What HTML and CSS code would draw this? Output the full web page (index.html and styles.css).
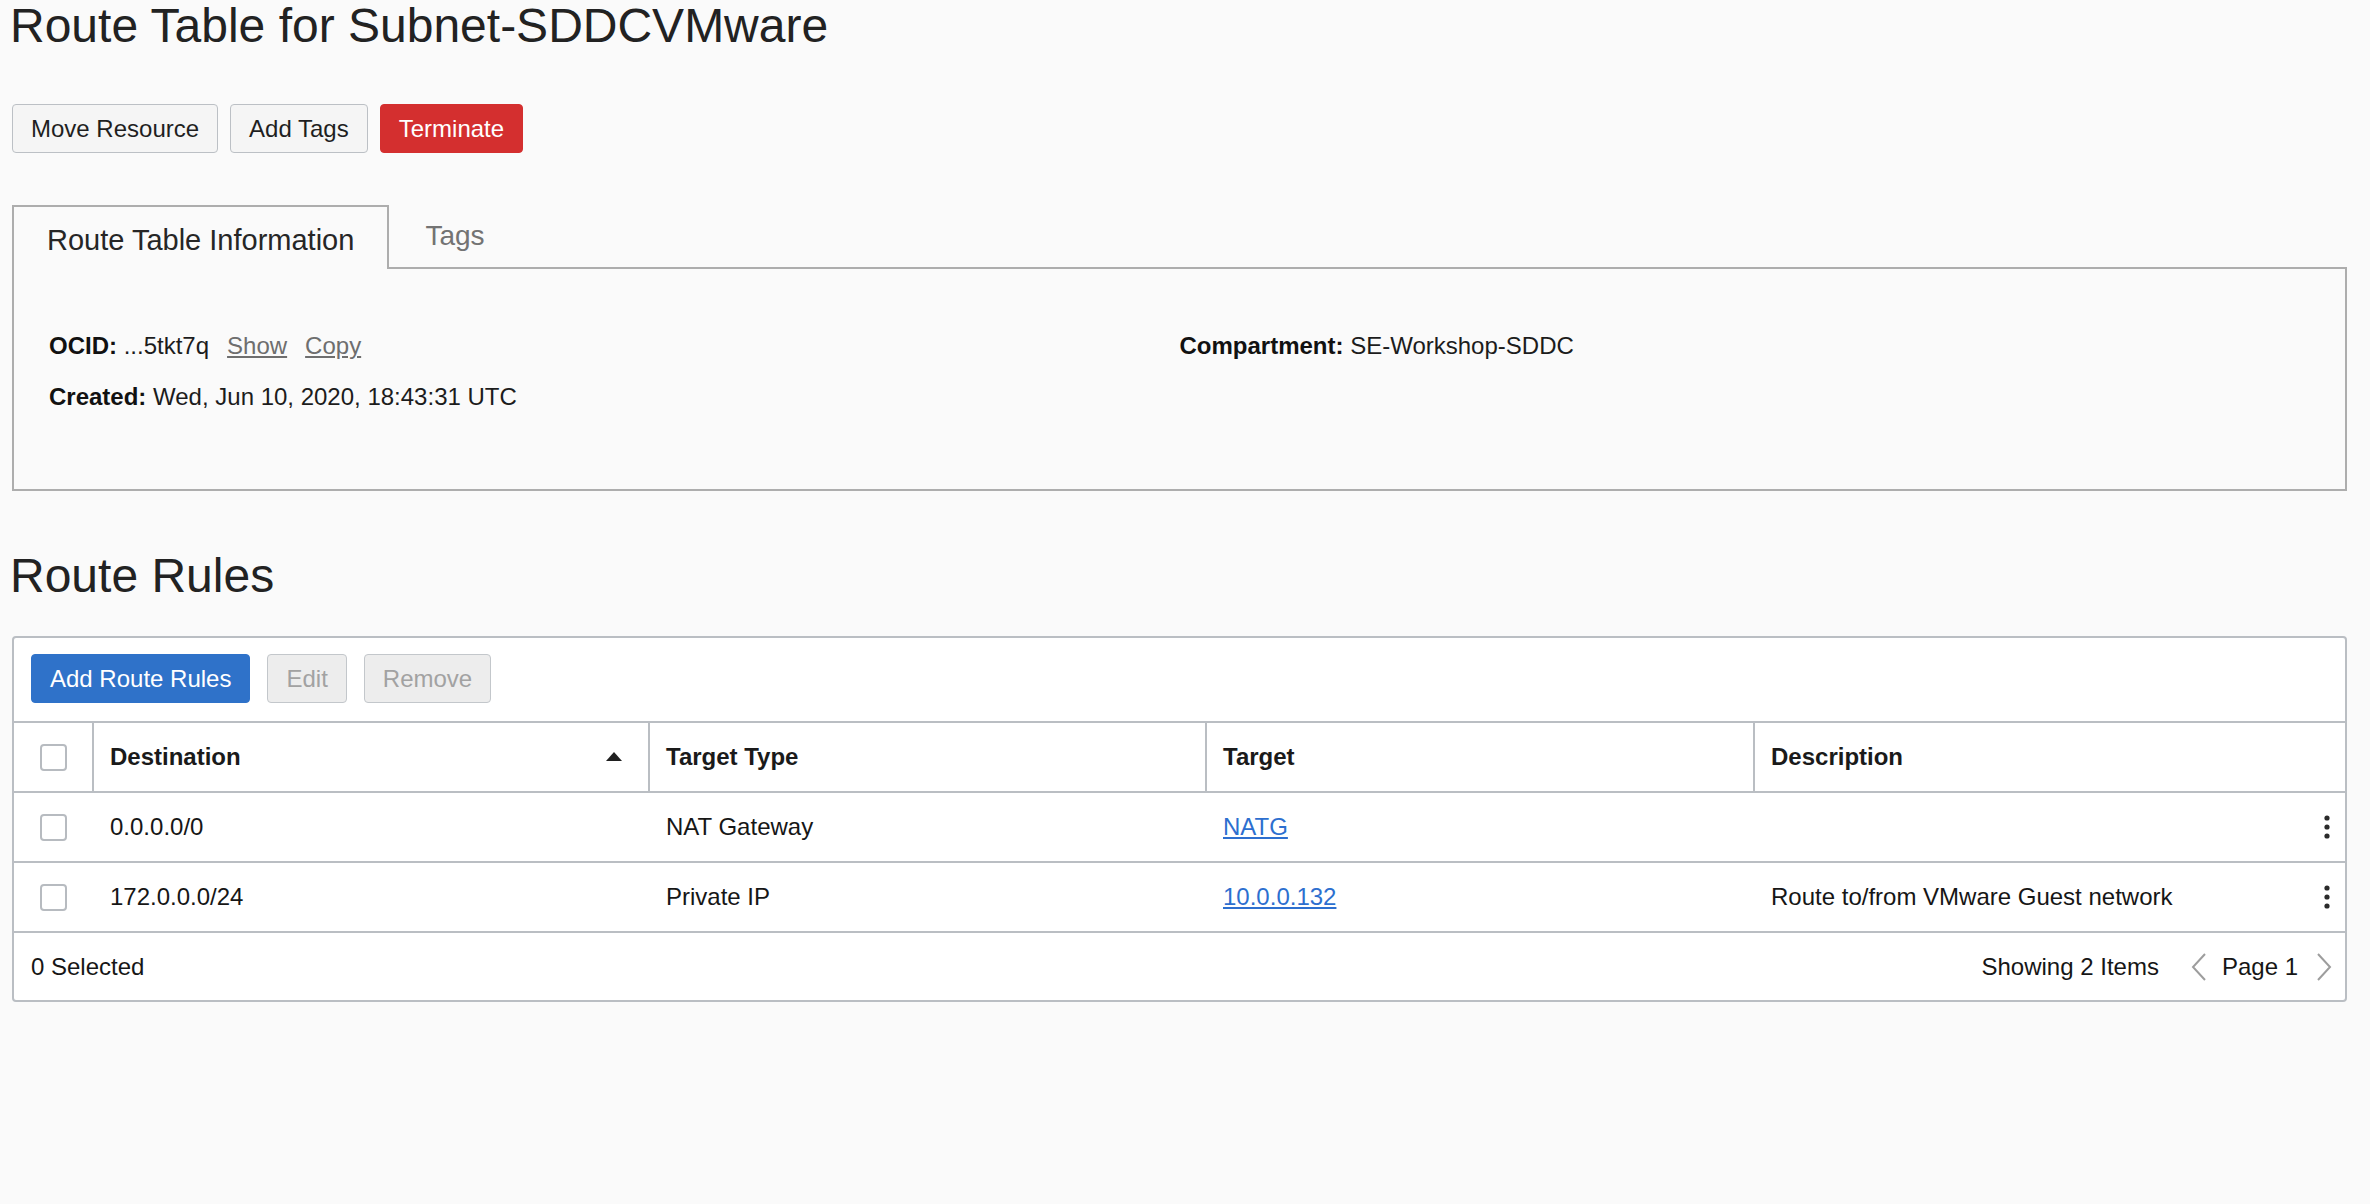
FILE: index.html
```html
<!DOCTYPE html>
<html lang="en">
<head>
<meta charset="utf-8">
<title>Route Table for Subnet-SDDCVMware</title>
<link rel="stylesheet" href="styles.css">
</head>
<body>
<div class="page">
  <h1 class="page-title">Route Table for Subnet-SDDCVMware</h1>

  <div class="actions">
    <button class="btn">Move Resource</button>
    <button class="btn">Add Tags</button>
    <button class="btn btn-danger">Terminate</button>
  </div>

  <div class="tabs">
    <div class="tabbar">
      <div class="tab tab-active">Route Table Information</div>
      <div class="tab tab-inactive">Tags</div>
      <div class="tab-fill"></div>
    </div>
    <div class="panel">
      <div class="info-grid">
        <div class="info-col">
          <div class="info-item"><span class="label">OCID:</span> <span>...5tkt7q</span><a class="sec-link">Show</a><a class="sec-link">Copy</a></div>
          <div class="info-item info-next"><span class="label">Created:</span> Wed, Jun 10, 2020, 18:43:31 UTC</div>
        </div>
        <div class="info-col">
          <div class="info-item"><span class="label">Compartment:</span> SE-Workshop-SDDC</div>
        </div>
      </div>
    </div>
  </div>

  <h2 class="section-title">Route Rules</h2>

  <div class="table-box">
    <div class="toolbar">
      <button class="btn btn-primary">Add Route Rules</button>
      <button class="btn btn-disabled">Edit</button>
      <button class="btn btn-disabled">Remove</button>
    </div>

    <div class="trow thead">
      <div class="cell cell-check"><span class="checkbox"></span></div>
      <div class="cell hcell hcell-sort">Destination
        <svg class="sort-icon" width="16" height="9" viewBox="0 0 16 9"><polygon points="8,0 16,9 0,9" fill="#1f1f1f"/></svg>
      </div>
      <div class="cell hcell">Target Type</div>
      <div class="cell hcell">Target</div>
      <div class="cell hcell">Description</div>
    </div>

    <div class="trow">
      <div class="cell cell-check"><span class="checkbox"></span></div>
      <div class="cell bcell">0.0.0.0/0</div>
      <div class="cell bcell">NAT Gateway</div>
      <div class="cell bcell"><a class="link">NATG</a></div>
      <div class="cell bcell cell-desc"><span></span>
        <svg class="kebab" width="6" height="24" viewBox="0 0 6 24"><circle cx="3" cy="3" r="2.6"/><circle cx="3" cy="12" r="2.6"/><circle cx="3" cy="21" r="2.6"/></svg>
      </div>
    </div>

    <div class="trow">
      <div class="cell cell-check"><span class="checkbox"></span></div>
      <div class="cell bcell">172.0.0.0/24</div>
      <div class="cell bcell">Private IP</div>
      <div class="cell bcell"><a class="link">10.0.0.132</a></div>
      <div class="cell bcell cell-desc"><span>Route to/from VMware Guest network</span>
        <svg class="kebab" width="6" height="24" viewBox="0 0 6 24"><circle cx="3" cy="3" r="2.6"/><circle cx="3" cy="12" r="2.6"/><circle cx="3" cy="21" r="2.6"/></svg>
      </div>
    </div>

    <div class="tfooter">
      <span class="selected">0 Selected</span>
      <div class="pager">
        <span class="count">Showing 2 Items</span>
        <svg class="chev chev-left" width="16" height="28" viewBox="0 0 16 28"><polyline points="14,1 2,14 14,27" fill="none" stroke="#9d9d9d" stroke-width="2"/></svg>
        <span class="page-num">Page 1</span>
        <svg class="chev chev-right" width="16" height="28" viewBox="0 0 16 28"><polyline points="2,1 14,14 2,27" fill="none" stroke="#9d9d9d" stroke-width="2"/></svg>
      </div>
    </div>
  </div>
</div>
</body>
</html>
```

FILE: styles.css
```css
* { box-sizing: border-box; }

html, body {
  margin: 0;
  padding: 0;
  background: #fafafa;
}

body {
  font-family: "Liberation Sans", Arial, Helvetica, sans-serif;
  color: #1c1c1c;
  font-size: 24px;
}

.page {
  padding: 0 23px 40px 12px;
}

.page-title {
  margin: 0 0 0 -2px;
  font-size: 48px;
  line-height: 52px;
  font-weight: normal;
  color: #222;
}

.actions {
  display: flex;
  gap: 12px;
  margin-top: 52px;
}

.btn {
  font-family: inherit;
  font-size: 24px;
  height: 49px;
  line-height: 47px;
  padding: 0 18px;
  border: 1px solid #bcc0c5;
  border-radius: 4px;
  background: #f5f5f5;
  color: #1f1f1f;
  cursor: pointer;
}

.btn-danger {
  background: #d42f2f;
  border-color: #d42f2f;
  color: #fff;
}

.btn-primary {
  background: #2f72c9;
  border-color: #2f72c9;
  color: #fff;
}

.btn-disabled {
  background: #ededed;
  border-color: #c3c7cb;
  color: #a2a2a2;
}

/* Tabs */
.tabs {
  margin-top: 52px;
}

.tabbar {
  display: flex;
  align-items: stretch;
}

.tab {
  font-size: 29px;
  line-height: 32px;
  white-space: nowrap;
}

.tab-active {
  border: 2px solid #adadad;
  border-bottom: none;
  padding: 17px 33px 13px;
  color: #262626;
}

.tab-inactive {
  border-bottom: 2px solid #adadad;
  padding: 15px 0 0 36px;
  font-size: 28px;
  color: #737373;
}

.tab-fill {
  flex: 1;
  border-bottom: 2px solid #adadad;
}

.panel {
  border: 2px solid #adadad;
  border-top: none;
  padding: 63px 35px 78px;
}

.info-grid {
  display: grid;
  grid-template-columns: 1fr 1fr;
}

.info-item {
  line-height: 28px;
  white-space: nowrap;
}

.info-next {
  margin-top: 23px;
}

.label {
  font-weight: bold;
  color: #111;
}

.sec-link {
  margin-left: 18px;
  color: #6e6e6e;
  text-decoration: underline;
  cursor: pointer;
}

.section-title {
  margin: 59px 0 0 -2px;
  font-size: 48px;
  line-height: 52px;
  font-weight: normal;
  color: #222;
}

/* Table */
.table-box {
  margin-top: 34px;
  border: 2px solid #babec3;
  border-radius: 4px;
  background: #fff;
}

.toolbar {
  display: flex;
  gap: 17px;
  padding: 16px 17px 18px;
  border-bottom: 2px solid #babec3;
}

.trow {
  display: grid;
  grid-template-columns: 78px 556px 557px 548px 1fr;
  height: 70px;
  border-bottom: 2px solid #babec3;
}

.cell {
  display: flex;
  align-items: center;
  white-space: nowrap;
}

.cell-check {
  justify-content: center;
}

.checkbox {
  display: block;
  width: 27px;
  height: 27px;
  border: 2px solid #b7bbc0;
  border-radius: 4px;
  background: #fff;
}

.hcell {
  border-left: 2px solid #babec3;
  padding-left: 16px;
  font-weight: bold;
  color: #1a1a1a;
}

.hcell-sort {
  justify-content: space-between;
  padding-right: 26px;
}

.sort-icon {
  display: block;
  margin-top: -2px;
}

.bcell {
  padding-left: 18px;
  color: #161616;
}

.cell-desc {
  justify-content: space-between;
  padding-right: 15px;
}

.kebab {
  display: block;
  fill: #2a2a2a;
}

.link {
  color: #2d6fcf;
  text-decoration: underline;
  cursor: pointer;
}

.tfooter {
  display: flex;
  align-items: center;
  justify-content: space-between;
  height: 67px;
  padding: 0 13px 0 17px;
  color: #161616;
}

.pager {
  display: flex;
  align-items: center;
}

.chev {
  display: block;
}

.chev-left {
  margin-left: 32px;
  margin-right: 15px;
}

.chev-right {
  margin-left: 18px;
}
```
